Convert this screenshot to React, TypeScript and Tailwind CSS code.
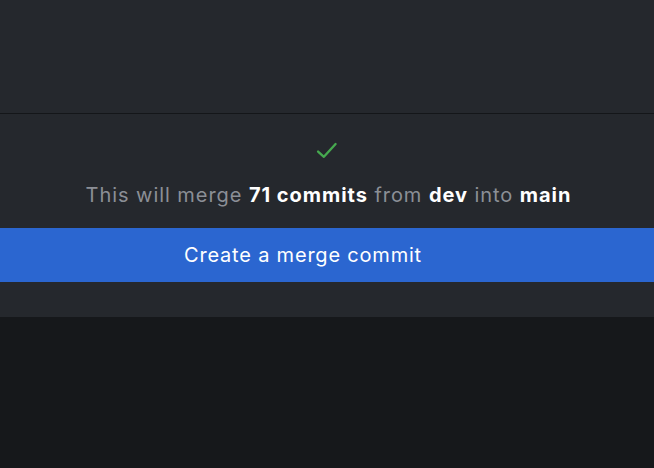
export default function App() {
  return (
    <div className="w-[654px] h-[468px] overflow-hidden bg-[#16181b] flex flex-col" style={{ fontFamily: 'Inter, "Noto Sans", sans-serif' }}>
      <div className="h-[114px] bg-[#25282d] border-b border-[#141619]" />
      <div className="h-[203px] bg-[#25282d] flex flex-col items-center">
        <svg className="mt-[23px] ml-[2px]" width="28" height="28" viewBox="0 0 24 24" fill="none" stroke="#46a94f" strokeWidth="2" strokeLinecap="round" strokeLinejoin="round">
          <path d="M3.5 12.5l5 4.5L18.5 6" />
        </svg>
        <div className="mt-[18px] ml-[3px] text-[20px] leading-[24px] text-[#8b8f96] tracking-[0.95px]">
          This will merge <span className="font-bold text-white">71 commits</span> from <span className="font-bold text-white">dev</span> into <span className="font-bold text-white">main</span>
        </div>
        <div className="mt-[21px] w-full h-[54px] bg-[#2b66d0] flex items-center justify-center pr-[48px]">
          <span className="text-[20px] text-white tracking-[0.8px]">Create a merge commit</span>
        </div>
      </div>
    </div>
  );
}
